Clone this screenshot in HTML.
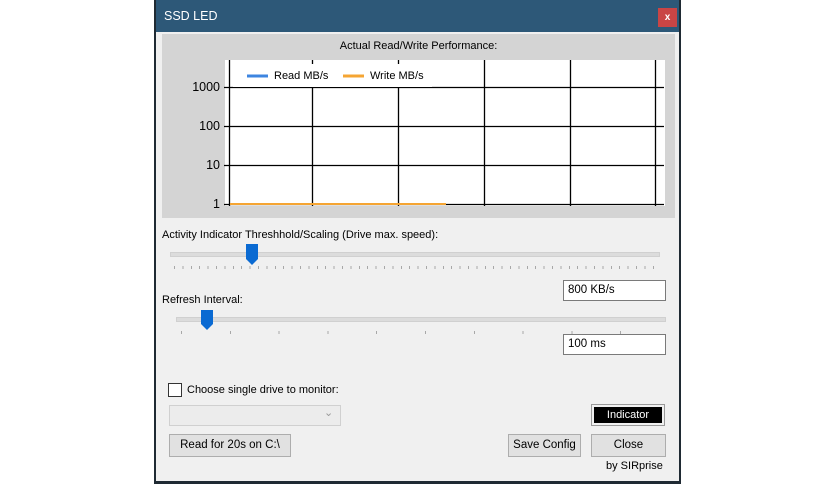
<!DOCTYPE html>
<html><head><style>
body{margin:0;width:836px;height:484px;background:#fff;position:relative;overflow:hidden;font-family:"Liberation Sans",sans-serif;font-size:11px;color:#000}
.a{position:absolute}
.btn{position:absolute;background:#e1e1e1;border:1px solid #adadad;box-sizing:border-box;text-align:center;font-size:11.5px}
.tb{position:absolute;background:#fff;border:1px solid #7a7a7a;box-sizing:border-box;padding:3px 0 0 4px;font-size:11.5px}
</style></head><body>
<div class="a" style="left:154px;top:0;width:527px;height:484px;background:#1f2a33"></div>
<div class="a" style="left:156px;top:0;width:523px;height:481px;background:#f0f0f0"></div>
<div class="a" style="left:156px;top:0;width:523px;height:32px;background:#2d5878"></div>
<div class="a" style="left:164px;top:9px;color:#fff;font-size:12.5px">SSD LED</div>
<div class="a" style="left:658px;top:8px;width:19px;height:19px;background:#c94545;color:#fff;font-size:10px;font-weight:bold;text-align:center;line-height:19px">x</div>
<div class="a" style="left:162px;top:34px;width:513px;height:184px;background:#d4d4d4"></div>
<div class="a" style="left:162px;top:40px;width:513px;text-align:center">Actual Read/Write Performance:</div>
<div class="a" style="left:225px;top:60px;width:440px;height:146px;background:#fff"></div>
<svg class="a" style="left:0;top:0" width="836" height="484">
<g stroke="#000" stroke-width="1.3">
<line x1="224" y1="87.5" x2="664" y2="87.5"/><line x1="224" y1="126.5" x2="664" y2="126.5"/>
<line x1="224" y1="165.5" x2="664" y2="165.5"/><line x1="224" y1="204.5" x2="664" y2="204.5"/>
<line x1="229.5" y1="60" x2="229.5" y2="206"/><line x1="312.5" y1="60" x2="312.5" y2="206"/>
<line x1="398.5" y1="60" x2="398.5" y2="206"/><line x1="484.5" y1="60" x2="484.5" y2="206"/>
<line x1="570.5" y1="60" x2="570.5" y2="206"/><line x1="655.5" y1="60" x2="655.5" y2="206"/>
</g>
<rect x="233" y="64" width="199" height="23" fill="#fff"/>
<line x1="247" y1="76" x2="268" y2="76" stroke="#3d85e0" stroke-width="3"/>
<line x1="343" y1="76" x2="364" y2="76" stroke="#f5a533" stroke-width="3"/>
<line x1="230" y1="204" x2="446" y2="204" stroke="#f5a533" stroke-width="2"/>
</svg>
<div class="a" style="left:274px;top:70px">Read MB/s</div>
<div class="a" style="left:370px;top:70px">Write MB/s</div>
<div class="a" style="left:180px;top:80px;width:40px;text-align:right;font-size:12.5px">1000</div>
<div class="a" style="left:180px;top:119px;width:40px;text-align:right;font-size:12.5px">100</div>
<div class="a" style="left:180px;top:158px;width:40px;text-align:right;font-size:12.5px">10</div>
<div class="a" style="left:180px;top:197px;width:40px;text-align:right;font-size:12.5px">1</div>
<div class="a" style="left:162px;top:229px">Activity Indicator Threshhold/Scaling (Drive max. speed):</div>
<div class="a" style="left:170px;top:252px;width:488px;height:3px;background:#dcdcdc;border:1px solid #d0d0d0"></div>
<svg class="a" style="left:246px;top:244px" width="13" height="22"><path d="M0 0H12V15L6 21L0 15Z" fill="#0a6ad2"/></svg>
<div class="a" style="left:174px;top:266px;width:484px;height:3px;background:repeating-linear-gradient(90deg,#a8a8a8 0 1px,transparent 1px 8.4px)"></div>
<div class="a" style="left:162px;top:294px">Refresh Interval:</div>
<div class="tb" style="left:563px;top:280px;width:103px;height:21px">800 KB/s</div>
<div class="a" style="left:176px;top:317px;width:488px;height:3px;background:#dcdcdc;border:1px solid #d0d0d0"></div>
<svg class="a" style="left:201px;top:310px" width="13" height="21"><path d="M0 0H12V14L6 20L0 14Z" fill="#0a6ad2"/></svg>
<div class="a" style="left:181px;top:331px;width:470px;height:3px;background:repeating-linear-gradient(90deg,#a8a8a8 0 1px,transparent 1px 48.8px)"></div>
<div class="tb" style="left:563px;top:334px;width:103px;height:21px">100 ms</div>
<div class="a" style="left:168px;top:383px;width:12px;height:12px;border:1px solid #333;background:#fff"></div>
<div class="a" style="left:187px;top:384px">Choose single drive to monitor:</div>
<div class="a" style="left:169px;top:405px;width:172px;height:21px;border:1px solid #d0d0d0;background:#ececec;box-sizing:border-box"></div>
<div class="a" style="left:324px;top:406px;color:#999;font-size:11px">&#8964;</div>
<div class="a" style="left:591px;top:404px;width:74px;height:22px;border:1px solid #999;box-sizing:border-box;background:#f0f0f0"></div>
<div class="a" style="left:594px;top:407px;width:68px;height:16px;background:#000;color:#fff;text-align:center;line-height:16px">Indicator</div>
<div class="btn" style="left:169px;top:434px;width:122px;height:23px;line-height:21px">Read for 20s on C:\</div>
<div class="btn" style="left:508px;top:434px;width:73px;height:23px;line-height:21px">Save Config</div>
<div class="btn" style="left:591px;top:434px;width:75px;height:23px;line-height:21px">Close</div>
<div class="a" style="left:606px;top:460px">by SIRprise</div>
</body></html>
